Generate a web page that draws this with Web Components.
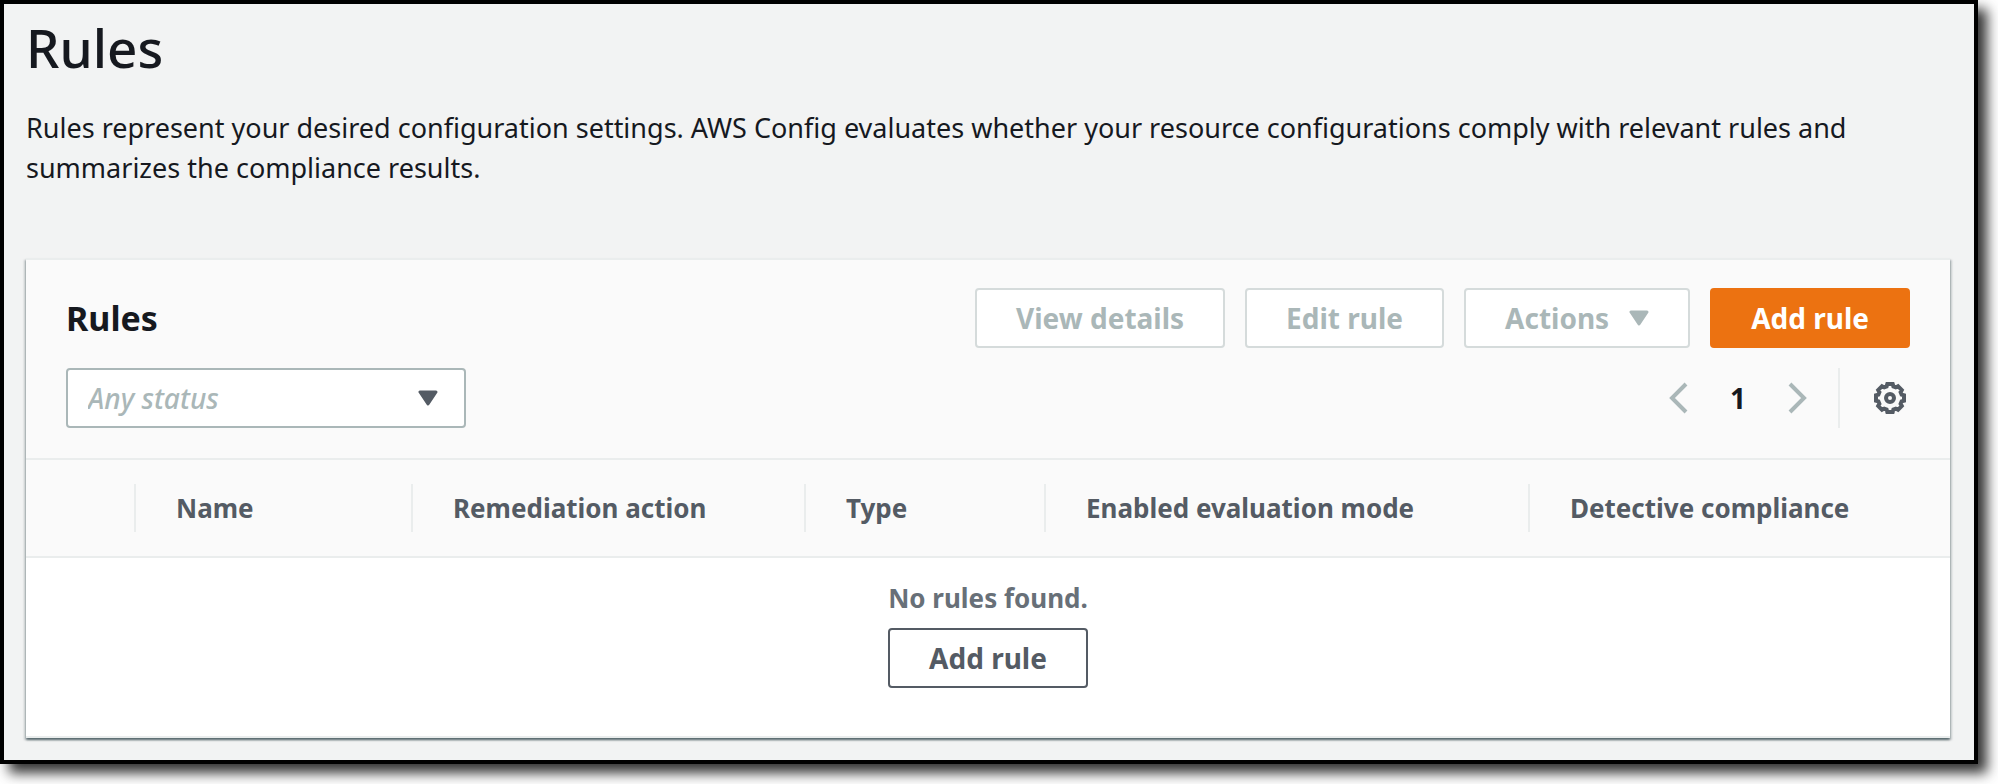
<!DOCTYPE html>
<html lang="en">
<head>
<meta charset="utf-8">
<title>Rules</title>
<style>
    body {
        margin: 0;
        background: #fff;
        color: #16191f;
        font-family: "Noto Sans", "Open Sans", sans-serif;
        font-size: 27px;
        line-height: 40px;
    }
</style>
</head>
<body>
<page-frame>
    <page-header heading="Rules">
        Rules represent your desired configuration settings. AWS Config evaluates whether your resource configurations comply with relevant rules and summarizes the compliance results.
    </page-header>
    <rules-panel heading="Rules">
        <action-button slot="actions" disabled>View details</action-button>
        <action-button slot="actions" disabled>Edit rule</action-button>
        <action-button slot="actions" disabled caret>Actions</action-button>
        <action-button slot="actions" variant="primary">Add rule</action-button>
        <status-filter slot="filter" placeholder="Any status"></status-filter>
        <table-pager slot="pager" page="1"></table-pager>
        <rules-table columns="Name,Remediation action,Type,Enabled evaluation mode,Detective compliance">
            <span>No rules found.</span>
            <action-button>Add rule</action-button>
        </rules-table>
    </rules-panel>
</page-frame>

<script>
    // small rounded triangle, shared by the drop-downs
    const caret = `<svg width="20" height="16" viewBox="0 0 20 16" aria-hidden="true">
        <path d="M2 2h16l-8 12z" fill="currentColor" stroke="currentColor" stroke-width="3" stroke-linejoin="round"/>
    </svg>`

    // bordered page with a drop shadow
    class PageFrame extends HTMLElement {
        constructor() {
            super()
            this.attachShadow({ mode: "open" })
        }
        connectedCallback() {
            this.shadowRoot.innerHTML = `<style>
            :host {
                display: block;
                margin: 0 20px 20px 0;
                padding: 12px 24px 22px 22px;
                border: 4px solid #000;
                background: #f2f3f3;
                box-shadow: 9px 9px 12px rgba(0,0,0,0.8);
            }
            </style>
            <slot></slot>`
        }
    }

    class PageHeader extends HTMLElement {
        constructor() {
            super()
            this.attachShadow({ mode: "open" })
        }
        connectedCallback() {
            this.shadowRoot.innerHTML = `<style>
            :host {
                display: block;
                margin-bottom: 70px;
            }
            h1 {
                margin: 0 0 28px;
                font-size: 53px;
                font-weight: 500;
                line-height: 64px;
            }
            p {
                margin: 0;
            }
            </style>
            <h1>${this.getAttribute('heading')}</h1>
            <p><slot></slot></p>`
        }
    }

    class ActionButton extends HTMLElement {
        constructor() {
            super()
            this.attachShadow({ mode: "open" })
        }
        connectedCallback() {
            const variant = this.getAttribute('variant') || 'normal'
            this.shadowRoot.innerHTML = `<style>
            :host {
                display: block;
            }
            button {
                display: flex;
                align-items: center;
                gap: 20px;
                height: 60px;
                padding: 0 39px;
                border: 2px solid #545b64;
                border-radius: 4px;
                background: #fff;
                color: #545b64;
                font: 700 28px/40px "Noto Sans", "Open Sans", sans-serif;
                white-space: nowrap;
                cursor: pointer;
            }
            button.primary {
                border-color: #ec7211;
                background: #ec7211;
                color: #fff;
            }
            button:disabled {
                border-color: #d5dbdb;
                color: #aab7b8;
                cursor: default;
            }
            </style>
            <button type="button" class="${variant}" ${this.hasAttribute('disabled') ? 'disabled' : ''}>
                <slot></slot>${this.hasAttribute('caret') ? caret : ''}
            </button>`
        }
    }

    class StatusFilter extends HTMLElement {
        constructor() {
            super()
            this.attachShadow({ mode: "open" })
        }
        connectedCallback() {
            this.shadowRoot.innerHTML = `<style>
            :host {
                display: grid;
                align-items: center;
                width: 400px;
            }
            select, svg {
                grid-area: 1 / 1;
            }
            select {
                appearance: none;
                width: 100%;
                height: 60px;
                padding: 0 60px 0 20px;
                border: 2px solid #aab7b8;
                border-radius: 4px;
                background: #fff;
                color: #aab7b8;
                font: italic 500 28px/40px "Noto Sans", "Open Sans", sans-serif;
            }
            svg {
                justify-self: end;
                margin-right: 28px;
                color: #545b64;
                pointer-events: none;
            }
            </style>
            <select aria-label="Status">
                <option>${this.getAttribute('placeholder')}</option>
            </select>
            ${caret}`
        }
    }

    class TablePager extends HTMLElement {
        constructor() {
            super()
            this.attachShadow({ mode: "open" })
        }
        connectedCallback() {
            this.shadowRoot.innerHTML = `<style>
            :host, nav {
                display: flex;
                align-items: center;
            }
            nav {
                gap: 22px;
                padding-right: 16px;
            }
            button {
                display: grid;
                place-items: center;
                width: 48px;
                height: 60px;
                padding: 0;
                border: 0;
                background: none;
                color: #aab7b8;
            }
            .page {
                width: 28px;
                color: #16191f;
                font: 700 28px/40px "Noto Sans", "Open Sans", sans-serif;
            }
            .settings {
                width: 72px;
                padding-left: 30px;
                border-left: 2px solid #eaeded;
                color: #545b64;
            }
            path, circle {
                fill: none;
                stroke: currentColor;
                stroke-width: 4;
            }
            </style>
            <nav aria-label="Pages">
                <button type="button" disabled aria-label="Previous page">
                    <svg width="20" height="32" viewBox="0 0 20 32"><path d="M18 2 4 16l14 14"/></svg>
                </button>
                <button type="button" class="page">${this.getAttribute('page')}</button>
                <button type="button" disabled aria-label="Next page">
                    <svg width="20" height="32" viewBox="0 0 20 32"><path d="M2 2l14 14L2 30"/></svg>
                </button>
            </nav>
            <button type="button" class="settings" aria-label="Preferences">
                <svg width="32" height="32" viewBox="-16 -16 32 32">
                    <path d="M14-2.7V2.7L11.6 3.4 10.6 5.8 11.8 8 8 11.8 5.8 10.6 3.4 11.6 2.7 14H-2.7L-3.4 11.6-5.8 10.6-8 11.8-11.8 8-10.6 5.8-11.6 3.4-14 2.7V-2.7L-11.6-3.4-10.6-5.8-11.8-8-8-11.8-5.8-10.6-3.4-11.6-2.7-14H2.7L3.4-11.6 5.8-10.6 8-11.8 11.8-8 10.6-5.8 11.6-3.4z"/>
                    <circle r="4"/>
                </svg>
            </button>`
        }
    }

    // card: title and buttons, filter and pager, then the table
    class RulesPanel extends HTMLElement {
        constructor() {
            super()
            this.attachShadow({ mode: "open" })
        }
        connectedCallback() {
            this.shadowRoot.innerHTML = `<style>
            :host {
                display: block;
                border-top: 2px solid #eaeded;
                background: #fff;
                box-shadow: 0 2px 2px rgba(0,28,36,0.5), 2px 2px 2px rgba(0,28,36,0.15), -2px 2px 2px rgba(0,28,36,0.15);
            }
            header {
                display: grid;
                gap: 20px;
                padding: 28px 40px 30px;
                border-bottom: 2px solid #eaeded;
                background: #fafafa;
            }
            .row {
                display: flex;
                align-items: center;
                justify-content: space-between;
            }
            .actions {
                display: flex;
                gap: 20px;
            }
            h2 {
                margin: 0;
                font-size: 34px;
                line-height: 40px;
            }
            </style>
            <header>
                <div class="row">
                    <h2>${this.getAttribute('heading')}</h2>
                    <div class="actions"><slot name="actions"></slot></div>
                </div>
                <div class="row">
                    <slot name="filter"></slot>
                    <slot name="pager"></slot>
                </div>
            </header>
            <slot></slot>`
        }
    }

    class RulesTable extends HTMLElement {
        constructor() {
            super()
            this.attachShadow({ mode: "open" })
        }
        connectedCallback() {
            const columns = this.getAttribute('columns').split(',')
            this.shadowRoot.innerHTML = `<style>
            :host {
                display: block;
                border-bottom: 2px solid #eaeded;
            }
            table {
                width: 100%;
                border-collapse: separate;
                border-spacing: 0;
                table-layout: fixed;
            }
            col:nth-child(1) { width: 108px; }
            col:nth-child(2) { width: 277px; }
            col:nth-child(3) { width: 393px; }
            col:nth-child(4) { width: 240px; }
            col:nth-child(5) { width: 484px; }
            thead th, thead td {
                padding: 24px 0;
                border-bottom: 2px solid #eaeded;
                background: #fafafa;
                color: #545b64;
                font-size: 26px;
                line-height: 48px;
                text-align: left;
                white-space: nowrap;
            }
            th span {
                display: block;
                padding-left: 40px;
                border-left: 2px solid #eaeded;
            }
            tbody td {
                padding: 0;
            }
            .empty {
                display: flex;
                flex-direction: column;
                align-items: center;
                gap: 10px;
                padding: 20px 0 48px;
                color: #687078;
                font-size: 26px;
                font-weight: 700;
            }
            </style>
            <table>
                <colgroup><col>${columns.map(() => '<col>').join('')}</colgroup>
                <thead>
                    <tr><td></td>${columns.map(name => `<th scope="col"><span>${name}</span></th>`).join('')}</tr>
                </thead>
                <tbody>
                    <tr><td colspan="${columns.length + 1}"><div class="empty"><slot></slot></div></td></tr>
                </tbody>
            </table>`
        }
    }

    customElements.define('page-frame', PageFrame)
    customElements.define('page-header', PageHeader)
    customElements.define('action-button', ActionButton)
    customElements.define('status-filter', StatusFilter)
    customElements.define('table-pager', TablePager)
    customElements.define('rules-panel', RulesPanel)
    customElements.define('rules-table', RulesTable)
</script>
</body>
</html>
